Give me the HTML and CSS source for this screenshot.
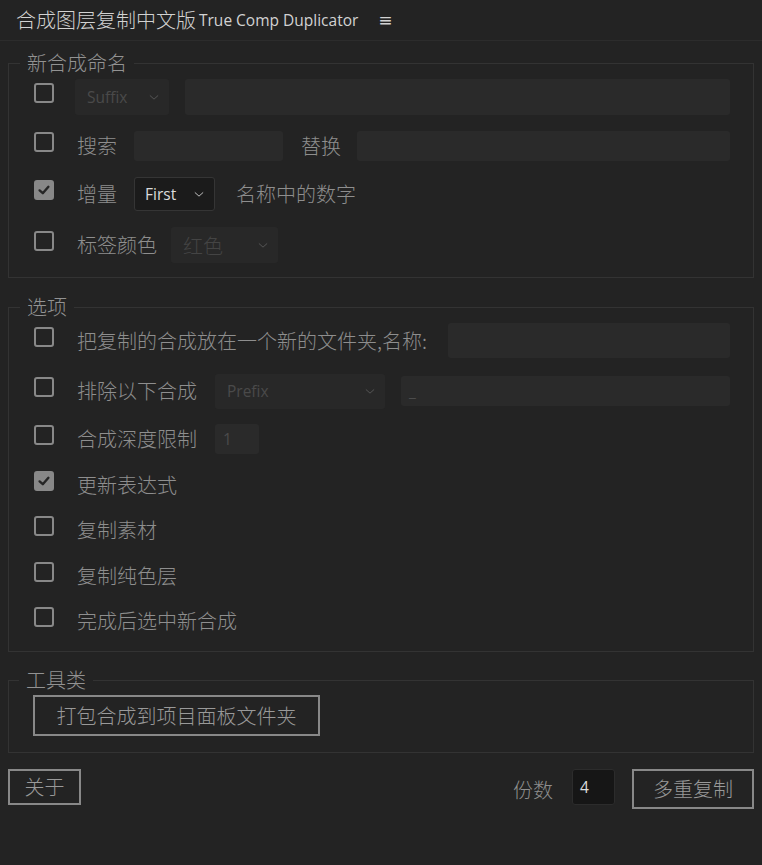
FILE: index.html
```html
<!DOCTYPE html>
<html lang="zh-CN">
<head>
<meta charset="utf-8">
<title>True Comp Duplicator</title>
<link rel="stylesheet" href="styles.css">
</head>
<body>
<div class="panel">
  <header class="titlebar">
    <span class="title-cn">合成图层复制中文版</span><span class="title-en">True Comp Duplicator</span>
    <span class="menu">≡</span>
  </header>

  <div class="content">
    <fieldset class="group g1">
      <legend>新合成命名</legend>
      <div class="row r36">
        <span class="cb"></span>
        <div class="select dis w-suffix mlm2"><span class="lat">Suffix</span><svg class="chev" viewBox="0 0 12 8"><path d="M1 1.5 L6 6 L11 1.5"/></svg></div>
        <div class="field grow ml16 h36"></div>
      </div>
      <div class="row r30">
        <span class="cb"></span>
        <span class="label">搜索</span>
        <div class="field w-search ml17 h30"></div>
        <span class="label ml18">替换</span>
        <div class="field grow ml16 h30"></div>
      </div>
      <div class="row r34">
        <span class="cb on"><svg viewBox="0 0 20 20"><path d="M4.5 10.5 L8.5 14 L15.5 6"/></svg></span>
        <span class="label">增量</span>
        <div class="select active w-first ml17"><span class="lat">First</span><svg class="chev" viewBox="0 0 12 8"><path d="M1 1.5 L6 6 L11 1.5"/></svg></div>
        <span class="label ml21">名称中的数字</span>
      </div>
      <div class="row r36">
        <span class="cb"></span>
        <span class="label">标签颜色</span>
        <div class="select dis w-color ml14"><span class="cn-dim">红色</span><svg class="chev" viewBox="0 0 12 8"><path d="M1 1.5 L6 6 L11 1.5"/></svg></div>
      </div>
    </fieldset>

    <fieldset class="group g2">
      <legend>选项</legend>
      <div class="row r35">
        <span class="cb"></span>
        <span class="label">把复制的合成放在一个新的文件夹,名称:</span>
        <div class="field grow ml21 h35"></div>
      </div>
      <div class="row r35">
        <span class="cb"></span>
        <span class="label">排除以下合成</span>
        <div class="select dis w-prefix ml18"><span class="lat">Prefix</span><svg class="chev" viewBox="0 0 12 8"><path d="M1 1.5 L6 6 L11 1.5"/></svg></div>
        <div class="field grow ml16 h30 txt"><span class="lat dim">_</span></div>
      </div>
      <div class="row r30">
        <span class="cb"></span>
        <span class="label">合成深度限制</span>
        <div class="field w-depth ml18 h30 txt"><span class="lat dim">1</span></div>
      </div>
      <div class="row r30">
        <span class="cb on"><svg viewBox="0 0 20 20"><path d="M4.5 10.5 L8.5 14 L15.5 6"/></svg></span>
        <span class="label">更新表达式</span>
      </div>
      <div class="row r30">
        <span class="cb"></span>
        <span class="label">复制素材</span>
      </div>
      <div class="row r30">
        <span class="cb"></span>
        <span class="label">复制纯色层</span>
      </div>
      <div class="row r30">
        <span class="cb"></span>
        <span class="label">完成后选中新合成</span>
      </div>
    </fieldset>

    <fieldset class="group g3">
      <legend>工具类</legend>
      <button class="btn btn-pack">打包合成到项目面板文件夹</button>
    </fieldset>

    <div class="footer">
      <button class="btn btn-about">关于</button>
      <span class="spacer"></span>
      <span class="label">份数</span>
      <div class="count"><span class="lat">4</span></div>
      <button class="btn btn-multi">多重复制</button>
    </div>
  </div>
</div>
</body>
</html>
```

FILE: styles.css
```css
html, body {
  margin: 0;
  padding: 0;
  background: #232323;
}

body {
  width: 762px;
  height: 865px;
  font-family: "Noto Sans CJK SC", "Noto Sans", sans-serif;
  font-weight: 300;
  color: #8e8e8e;
}

.panel {
  display: flex;
  flex-direction: column;
}

.titlebar {
  height: 41px;
  border-bottom: 1px solid #2c2c2c;
  display: flex;
  align-items: center;
  padding-left: 16px;
  color: #d2d2d2;
  box-sizing: border-box;
}

.title-cn {
  font-size: 20px;
  line-height: 24px;
}

.title-en {
  font-family: "Open Sans", "Noto Sans", sans-serif;
  font-weight: 400;
  font-size: 15.5px;
  margin-left: 3px;
  line-height: 24px;
}

.menu {
  margin-left: 20px;
  font-family: "DejaVu Sans", sans-serif;
  font-weight: 400;
  font-size: 17px;
  color: #d2d2d2;
}

.content {
  padding: 0 8px;
  display: flex;
  flex-direction: column;
}

.group {
  margin: 0;
  border: 1px solid #333333;
  padding: 6px 23px 14px 25px;
  display: flex;
  flex-direction: column;
  min-width: 0;
}

.group legend {
  font-size: 20px;
  line-height: 20px;
  padding: 0 7px;
  margin-left: -14px;
  color: #929292;
}

.g1 {
  margin-top: 12px;
  gap: 16px;
}

.g2 {
  margin-top: 19px;
  gap: 15.5px;
  padding-bottom: 15px;
}

.g3 {
  margin-top: 18px;
  padding: 5px 23px 16px 24px;
}

.row {
  display: flex;
  align-items: center;
}

.r36 { height: 36px; }
.r35 { height: 35px; }
.r34 { height: 34px; }
.r30 { height: 30px; }

.cb {
  width: 20px;
  height: 20px;
  box-sizing: border-box;
  border: 2px solid #888888;
  border-radius: 3px;
  flex: none;
  margin-right: 23px;
  margin-bottom: 8px;
  display: flex;
}

.cb.on {
  background: #888888;
}

.cb svg {
  width: 16px;
  height: 16px;
  fill: none;
  stroke: #262626;
  stroke-width: 3;
  stroke-linecap: round;
  stroke-linejoin: round;
}

.label {
  font-size: 20px;
  line-height: 24px;
  color: #8e8e8e;
  white-space: nowrap;
}

.lat {
  font-family: "Open Sans", "Noto Sans", sans-serif;
  font-weight: 400;
  font-size: 15.5px;
}

.field {
  background: #2a2a2a;
  border-radius: 3px;
  box-sizing: border-box;
}

.field.txt {
  display: flex;
  align-items: center;
  padding-left: 8px;
}

.dim {
  color: #4c4c4c;
}

.grow { flex: 1; }
.h36 { height: 36px; }
.h35 { height: 35px; }
.h30 { height: 30px; }

.mlm2 { margin-left: -2px; }
.ml14 { margin-left: 14px; }
.ml16 { margin-left: 16px; }
.ml17 { margin-left: 17px; }
.ml18 { margin-left: 18px; }
.ml21 { margin-left: 21px; }

.w-search { width: 149px; }
.w-depth { width: 44px; }

.select {
  display: flex;
  align-items: center;
  justify-content: space-between;
  box-sizing: border-box;
  border-radius: 3px;
  padding: 0 10px 0 12px;
  flex: none;
}

.select.dis {
  background: #282828;
  height: 36px;
  color: #4a4a4a;
}

.select.active {
  background: #1b1b1b;
  border: 1px solid #353535;
  height: 34px;
  color: #dcdcdc;
  padding-left: 10px;
}

.cn-dim {
  font-size: 20px;
  color: #444444;
}

.w-suffix { width: 94px; }
.w-first { width: 81px; }
.w-color { width: 107px; }
.w-prefix { width: 170px; height: 35px !important; }

.chev {
  width: 10px;
  height: 7px;
  fill: none;
  stroke: currentColor;
  stroke-width: 1.2;
}

.select.dis .chev { stroke: #555555; }
.select.active .chev { stroke: #bdbdbd; }

.btn {
  font-family: "Noto Sans CJK SC", sans-serif;
  font-weight: 300;
  font-size: 20px;
  line-height: 24px;
  color: #999999;
  background: #232323;
  border: 2px solid #888888;
  border-radius: 0;
  padding: 0;
  box-sizing: border-box;
}

.btn-pack {
  width: 287px;
  height: 41px;
  align-self: flex-start;
}

.footer {
  margin-top: 16px;
  display: flex;
  align-items: flex-start;
}

.footer .label {
  margin-top: 9px;
}

.btn-about {
  width: 73px;
  height: 36px;
}

.spacer { flex: 1; }

.count {
  width: 43px;
  height: 36px;
  margin-left: 19px;
  background: #161616;
  border: 1px solid #2c2c2c;
  border-radius: 3px;
  box-sizing: border-box;
  display: flex;
  align-items: center;
  padding-left: 7px;
  color: #dcdcdc;
}

.btn-multi {
  width: 122px;
  height: 40px;
  margin-left: 17px;
}
```
